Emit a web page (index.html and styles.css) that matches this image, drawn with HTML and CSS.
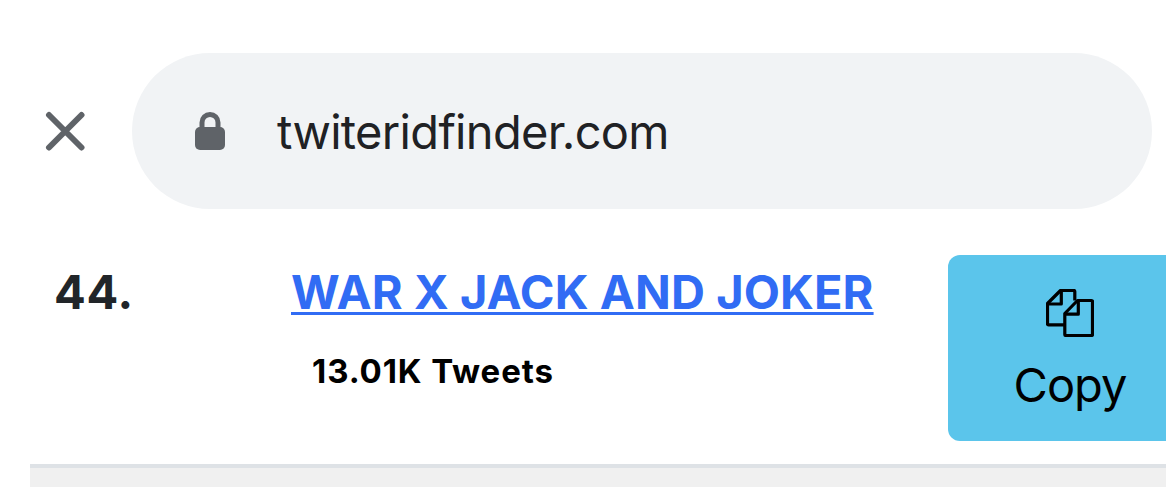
FILE: index.html
```
<!DOCTYPE html>
<html lang="en">
<head>
<meta charset="utf-8">
<meta name="viewport" content="width=device-width, initial-scale=1">
<title>twiteridfinder.com</title>
<link rel="stylesheet" href="styles.css">
</head>
<body>

<div class="topbar">
  <svg class="close" viewBox="0 0 40 40">
    <path d="M4 4L36.5 36.5M36.5 4L4 36.5"/>
  </svg>
  <div class="address">
    <svg class="lock" viewBox="0 0 30 38">
      <path class="shackle" d="M7 17V10.5a8 8 0 0 1 16 0V17"/>
      <rect y="15" width="30" height="23" rx="5"/>
    </svg>
    <span class="url">twiteridfinder.com</span>
  </div>
</div>

<div class="row">
  <div class="number">44.</div>
  <div class="trend">
    <a class="name" href="#">WAR X JACK AND JOKER</a>
    <div class="count">13.01K Tweets</div>
  </div>
  <div class="copy">
    <svg class="files" viewBox="0 0 48 48">
      <path d="M18 35.8H2.5a1 1 0 0 1-1-1V14.5L14.5 1.5H27.8a1 1 0 0 1 1 1V11.5"/>
      <path d="M1.5 15H15.3V1.5"/>
      <path d="M18.8 24.5L31.5 11.5H45.5a1 1 0 0 1 1 1V45.5a1 1 0 0 1-1 1H19.8a1 1 0 0 1-1-1Z"/>
      <path d="M18.8 25.2H32.3V11.5"/>
    </svg>
    <span>Copy</span>
  </div>
</div>

<div class="next-row"></div>

</body>
</html>
```

FILE: styles.css
```
* {
  box-sizing: border-box;
}

body {
  margin: 0;
  height: 487px;
  overflow: hidden;
  background-color: #fff;
  color: #212529;
  font-family: Inter, "Liberation Sans", sans-serif;
}

.topbar {
  display: flex;
  align-items: center;
  padding: 53px 14px 0 45px;
}

.close {
  width: 40px;
  height: 40px;
  margin-right: 47px;
  fill: none;
  stroke: #5f6368;
  stroke-width: 6;
  stroke-linecap: round;
}

.address {
  flex: 1;
  display: flex;
  align-items: center;
  height: 156px;
  padding-left: 63px;
  border-radius: 78px;
  background-color: #f1f3f5;
}

.lock {
  width: 30px;
  height: 38px;
  margin-right: 52px;
  fill: #5f6368;
}

.shackle {
  fill: none;
  stroke: #5f6368;
  stroke-width: 5;
}

.url {
  padding-top: 2px;
  color: #202124;
  font-size: 47px;
  letter-spacing: -0.68px;
  line-height: 60px;
}

.row {
  display: flex;
  height: 259px;
  margin-left: 30px;
  padding-top: 46px;
  border-bottom: 4px solid #dee2e6;
}

.number {
  flex: none;
  width: 261px;
  padding: 8px 0 0 24px;
  font-size: 47px;
  font-weight: 700;
  letter-spacing: 0.7px;
  line-height: 58px;
}

.trend {
  flex: none;
  width: 657px;
  padding-top: 8px;
}

.name {
  display: block;
  width: fit-content;
  color: #316cf4;
  font-size: 47px;
  font-weight: 650;
  letter-spacing: 0.1px;
  line-height: 58px;
  white-space: nowrap;
  text-decoration-thickness: 3px;
  text-underline-offset: 3px;
}

.count {
  padding: 30px 0 0 21px;
  color: #000;
  font-size: 33px;
  font-weight: 650;
  letter-spacing: 0.9px;
  line-height: 40px;
}

.copy {
  flex: none;
  display: flex;
  flex-direction: column;
  align-items: center;
  width: 244px;
  height: 186px;
  padding-top: 34px;
  border-radius: 12px;
  background-color: #5bc5eb;
  color: #000;
  font-size: 47px;
  letter-spacing: -1px;
  line-height: 58px;
}

.files {
  width: 48px;
  height: 48px;
  margin-bottom: 19px;
  fill: none;
  stroke: #000;
  stroke-width: 3.2;
  stroke-linejoin: round;
}

.next-row {
  height: 19px;
  margin-left: 30px;
  background-color: #f0f0f0;
}
```
